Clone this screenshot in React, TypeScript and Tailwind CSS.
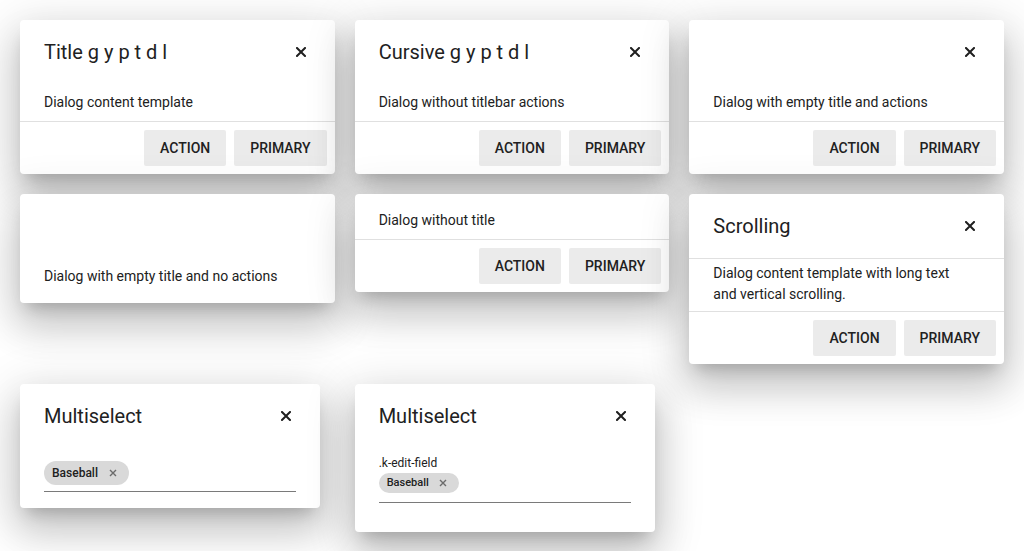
import type { ReactNode } from "react";

const FONT = { fontFamily: "Roboto, 'Liberation Sans', sans-serif" };

const SHADOW =
  "shadow-[0_11px_15px_-7px_rgba(0,0,0,0.2),0_24px_38px_3px_rgba(0,0,0,0.14),0_9px_46px_8px_rgba(0,0,0,0.12)]";

function CloseIcon({ size = 10 }: { size?: number }) {
  return (
    <svg width={size} height={size} viewBox="0 0 10 10" fill="none">
      <path d="M1 1L9 9M9 1L1 9" stroke="#1f1f1f" strokeWidth="2" strokeLinecap="square" />
    </svg>
  );
}

function TitleBar({ title, border }: { title?: string; border?: boolean }) {
  return (
    <div className={`flex items-center pl-6 pr-6 ${border ? "h-[65px] border-b border-[#e0e0e0]" : "h-16"}`}>
      <span className="flex-1 text-[20px] leading-8 text-[#212121] whitespace-pre">{title ?? ""}</span>
      <button className="w-5 h-5 flex items-center justify-center">
        <CloseIcon />
      </button>
    </div>
  );
}

function Actions() {
  return (
    <div className="flex justify-end gap-2 p-2 border-t border-[#e0e0e0]">
      <button className="h-9 px-4 rounded-[2px] bg-[#ebebeb] text-[14px] font-medium uppercase text-[#212121]">
        Action
      </button>
      <button className="h-9 px-4 rounded-[2px] bg-[#ebebeb] text-[14px] font-medium uppercase text-[#212121]">
        Primary
      </button>
    </div>
  );
}

function Dialog({ children, width }: { children: ReactNode; width?: string }) {
  return (
    <div className={`bg-white rounded overflow-hidden ${SHADOW} ${width ?? ""}`}>{children}</div>
  );
}

function Content({ children, className }: { children: ReactNode; className: string }) {
  return <div className={`px-6 text-[14px] leading-[21px] text-[#212121] ${className}`}>{children}</div>;
}

function Chip({ small }: { small?: boolean }) {
  return (
    <span
      className={`inline-flex items-center rounded-full bg-[#d9d9d9] text-[#212121] font-medium ${
        small ? "h-[20px] pl-2 pr-3 text-[11px] gap-[10px]" : "h-6 pl-2 pr-3 text-[12px] gap-[11px]"
      }`}
    >
      Baseball
      <svg width="8" height="8" viewBox="0 0 8 8" fill="none">
        <path d="M1 1L7 7M7 1L1 7" stroke="#6b6b6b" strokeWidth="1.4" />
      </svg>
    </span>
  );
}

export default function App() {
  return (
    <div className="min-h-screen bg-white" style={FONT}>
      <div className="grid grid-cols-3 gap-5 p-5 items-start">
        <Dialog>
          <TitleBar title="Title g y p t d l" />
          <Content className="pt-2 pb-2">Dialog content template</Content>
          <Actions />
        </Dialog>
        <Dialog>
          <TitleBar title="Cursive g y p t d l" />
          <Content className="pt-2 pb-2">Dialog without titlebar actions</Content>
          <Actions />
        </Dialog>
        <Dialog>
          <TitleBar />
          <Content className="pt-2 pb-2">Dialog with empty title and actions</Content>
          <Actions />
        </Dialog>

        <Dialog>
          <div className="h-16" />
          <Content className="pt-2 pb-4">Dialog with empty title and no actions</Content>
        </Dialog>
        <Dialog>
          <Content className="pt-4 pb-2">Dialog without title</Content>
          <Actions />
        </Dialog>
        <Dialog>
          <TitleBar title="Scrolling" border />
          <Content className="h-[52px] pt-[4px] overflow-hidden">
            Dialog content template with long text
            <br />
            and vertical scrolling.
          </Content>
          <Actions />
        </Dialog>

        <Dialog width="w-[300px]">
          <TitleBar title="Multiselect" />
          <div className="px-6 pt-2 pb-4">
            <div className="flex border-b border-[#7a7a7a] pt-[5px] pb-[6px]">
              <Chip />
            </div>
          </div>
        </Dialog>
        <Dialog width="w-[300px]">
          <TitleBar title="Multiselect" />
          <div className="px-6 pt-2 pb-[29px]">
            <div className="text-[12px] leading-[15px] text-[#212121]">.k-edit-field</div>
            <div className="flex border-b border-[#7a7a7a] pt-[2px] pb-[9px]">
              <Chip small />
            </div>
          </div>
        </Dialog>
      </div>
    </div>
  );
}
